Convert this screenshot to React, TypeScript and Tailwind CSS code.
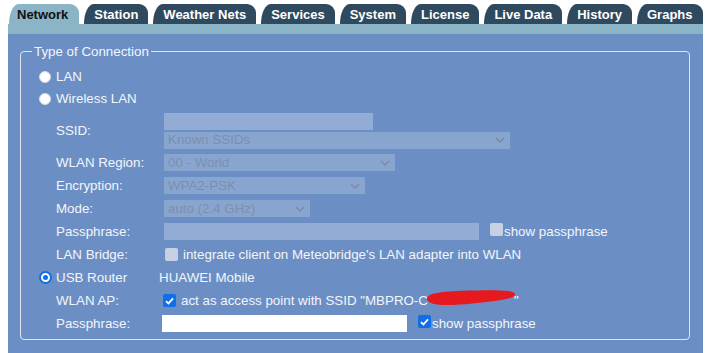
import React from "react";

const tabs = ["Network", "Station", "Weather Nets", "Services", "System", "License", "Live Data", "History", "Graphs"];

function Chevron() {
  return (
    <svg width="10" height="6" viewBox="0 0 10 6" className="shrink-0">
      <path d="M1 1 L5 5 L9 1" fill="none" stroke="#7d8aa3" strokeWidth="1.5" />
    </svg>
  );
}

function DSelect({ w, text }: { w: string; text: string }) {
  return (
    <div className={`${w} h-[17px] bg-[#88a5d0] flex items-center justify-between pl-[4px] pr-[5px] text-[#7d8fae]`}>
      <span>{text}</span>
      <Chevron />
    </div>
  );
}

function Row({ label, children, h = "h-[23px]" }: { label: string; children?: React.ReactNode; h?: string }) {
  return (
    <div className={`flex items-center ${h}`}>
      <div className="w-[17px]" />
      <div className="w-[108px] shrink-0">{label}</div>
      {children}
    </div>
  );
}

function RadioOff() {
  return <span className="block w-[12px] h-[12px] rounded-full bg-white border border-[#d8dce4] shrink-0" />;
}

function RadioOn() {
  return (
    <span className="w-[13px] h-[13px] rounded-full bg-white border-[2px] border-[#0f6fe8] shrink-0 flex items-center justify-center">
      <span className="block w-[5px] h-[5px] rounded-full bg-[#0f6fe8]" />
    </span>
  );
}

function CheckOff() {
  return <span className="block w-[13px] h-[13px] rounded-[2px] bg-[#c6d1e4] shrink-0" />;
}

function CheckOn() {
  return (
    <span className="w-[13px] h-[13px] rounded-[2px] bg-[#0f6fe8] shrink-0 flex items-center justify-center">
      <svg width="9" height="8" viewBox="0 0 9 8">
        <path d="M1 4.2 L3.4 6.5 L8 1.3" fill="none" stroke="white" strokeWidth="1.8" />
      </svg>
    </span>
  );
}

export default function App() {
  return (
    <div className="w-[710px] h-[353px] bg-white pl-[8px] pt-[4px] overflow-hidden font-['Liberation_Sans',Arial,sans-serif] text-[13.33px] text-[#f3f5fa]">
      <div className="flex gap-[5px] pl-[1px] h-[20px] text-[13px]">
        {tabs.map((t, i) => (
          <div
            key={t}
            className={
              i === 0
                ? "h-[20px] px-[8px] pr-[11px] rounded-tl-[10px_20px] rounded-tr-[9px] bg-[#8bb4c6] text-[#111] font-bold flex items-center leading-none"
                : "h-[20px] px-[10px] rounded-tl-[10px_20px] rounded-tr-[9px] bg-[#2f4a5f] text-white font-bold flex items-center leading-none"
            }
          >
            {t}
          </div>
        ))}
      </div>
      <div className="w-[695px]">
        <div className="h-[10px] bg-[#8bb4c6]" />
        <div className="bg-[#6b8fc4] pt-[10px] pb-[20px] pl-[12px] pr-[13px]">
          <fieldset className="border border-[#dfe7f3] rounded-[4px] pl-[18px] pb-[4px] pt-[7px]">
            <legend className="-ml-[7px] px-[2px] leading-[15px]">Type of Connection</legend>
            <div className="flex items-center h-[22px]">
              <div className="w-[17px]"><RadioOff /></div>
              <span>LAN</span>
            </div>
            <div className="flex items-center h-[22px]">
              <div className="w-[17px]"><RadioOff /></div>
              <span>Wireless LAN</span>
            </div>
            <div className="flex items-center h-[41px]">
              <div className="w-[17px]" />
              <div className="w-[108px] shrink-0">SSID:</div>
              <div className="flex flex-col gap-[2px]">
                <div className="w-[209px] h-[17px] bg-[#93acd6]" />
                <DSelect w="w-[346px]" text="Known SSIDs" />
              </div>
            </div>
            <Row label="WLAN Region:"><DSelect w="w-[231px]" text="00 - World" /></Row>
            <Row label="Encryption:"><DSelect w="w-[201px]" text="WPA2-PSK" /></Row>
            <Row label="Mode:"><DSelect w="w-[146px]" text="auto (2.4 GHz)" /></Row>
            <Row label="Passphrase:">
              <div className="w-[315px] h-[17px] bg-[#93acd6]" />
              <span className="ml-[11px] -mt-[4px]"><CheckOff /></span>
              <span className="ml-px">show passphrase</span>
            </Row>
            <Row label="LAN Bridge:">
              <span className="ml-[1px]"><CheckOff /></span>
              <span className="ml-[5px]">integrate client on Meteobridge's LAN adapter into WLAN</span>
            </Row>
            <div className="flex items-center h-[23px]">
              <div className="w-[17px]"><RadioOn /></div>
              <div className="w-[103px] shrink-0">USB Router</div>
              <span>HUAWEI Mobile</span>
            </div>
            <Row label="WLAN AP:">
              <span className="-ml-[1px]"><CheckOn /></span>
              <span className="ml-[5px] relative">
                act as access point with SSID "MBPRO-C<span className="inline-block w-[86px]" />"
                <svg className="absolute left-[244px] -top-[2px]" width="92" height="18" viewBox="0 0 92 18">
                  <path
                    d="M2 10 C1 3 25 2 48 1.5 C72 1 90 1 90 5.5 C90 10 72 12 48 14.5 C22 17 3 17 2 10 Z"
                    fill="#e5191e"
                  />
                </svg>
              </span>
            </Row>
            <Row label="Passphrase:">
              <div className="-ml-[2px] w-[245px] h-[17px] bg-white" />
              <span className="ml-[11px] -mt-[4px]"><CheckOn /></span>
              <span className="ml-px">show passphrase</span>
            </Row>
          </fieldset>
        </div>
      </div>
    </div>
  );
}
